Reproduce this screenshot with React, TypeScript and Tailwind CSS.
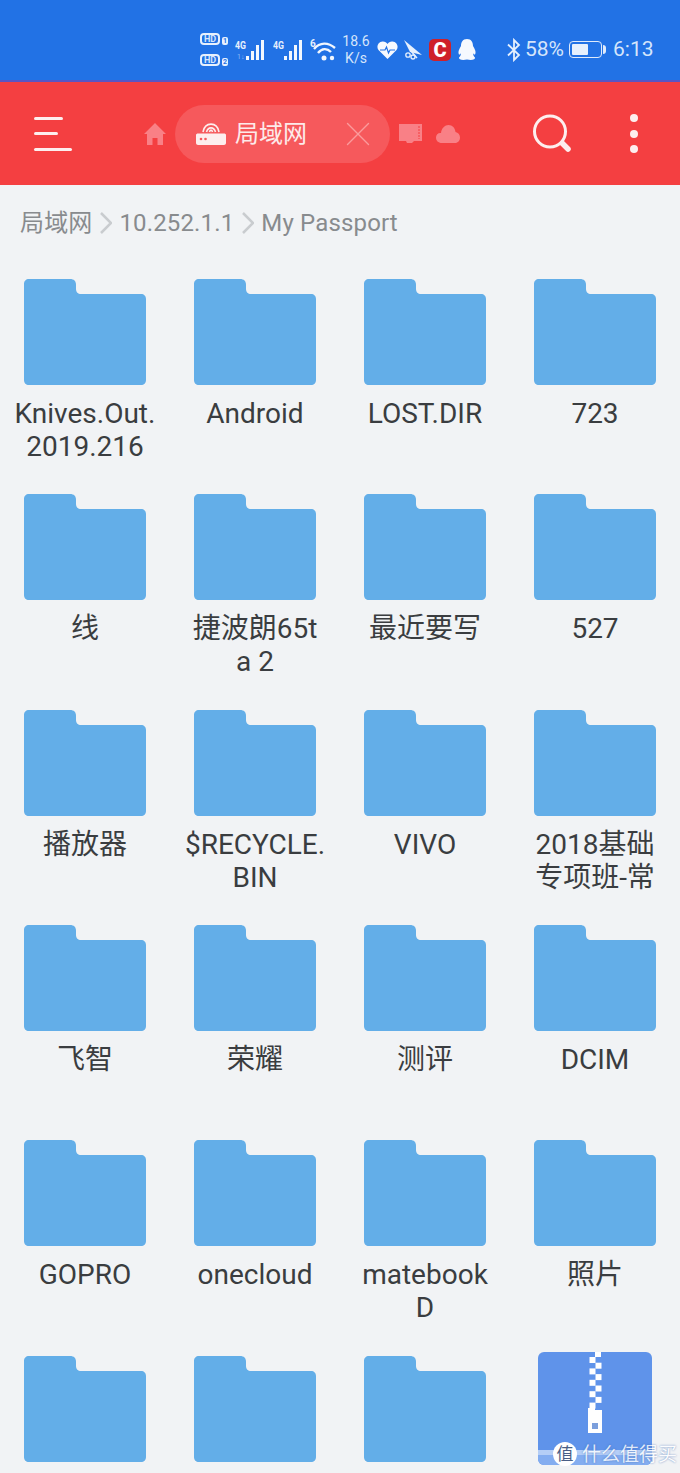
import React from "react";
import { X } from "lucide-react";

const ROBOTO = "font-['Roboto','Noto_Sans_CJK_SC',sans-serif]";

const items: { lines: string[]; zip?: boolean }[] = [
  { lines: ["Knives.Out.", "2019.216"] },
  { lines: ["Android"] },
  { lines: ["LOST.DIR"] },
  { lines: ["723"] },
  { lines: ["线"] },
  { lines: ["捷波朗65t", "a 2"] },
  { lines: ["最近要写"] },
  { lines: ["527"] },
  { lines: ["播放器"] },
  { lines: ["$RECYCLE.", "BIN"] },
  { lines: ["VIVO"] },
  { lines: ["2018基础", "专项班-常"] },
  { lines: ["飞智"] },
  { lines: ["荣耀"] },
  { lines: ["测评"] },
  { lines: ["DCIM"] },
  { lines: ["GOPRO"] },
  { lines: ["onecloud"] },
  { lines: ["matebook", "D"] },
  { lines: ["照片"] },
  { lines: [] },
  { lines: [] },
  { lines: [] },
  { lines: [], zip: true },
];

function FolderIcon() {
  return (
    <svg width="122" height="107" viewBox="0 0 122 107" className="shrink-0">
      <path
        d="M5 0H46C50 0 52 2 52 6V10C52 13 54 15 57 15H117C120 15 122 17 122 20V101C122 104 120 106 117 106H5C2 106 0 104 0 101V5C0 2 2 0 5 0Z"
        fill="#63aee8"
      />
    </svg>
  );
}

function ZipIcon() {
  const rows = [0, 1, 2, 3, 4, 5, 6, 7, 8];
  return (
    <svg width="114" height="114" viewBox="0 0 114 114" className="shrink-0 mt-[-4px]">
      <rect width="114" height="113" rx="6" fill="#5f93ea" />
      <path d="M0 98H114V107C114 110 111 113 108 113H6C3 113 0 110 0 107Z" fill="#84adf0" />
      <rect y="98" width="114" height="5" fill="#b5cef6" />
      <rect x="57" y="0" width="6" height="5" fill="#fff" />
      {rows.map((r) => (
        <rect key={r} x={r % 2 ? 57.5 : 51.5} y={5 + r * 5.7} width="6" height="6" fill="#fff" />
      ))}
      <path d="M50 56H57V58H64V81H50Z" fill="#fff" />
      <rect x="54" y="71" width="6" height="6" fill="#7c9fdc" />
    </svg>
  );
}

function Signal({ sub }: { sub?: boolean }) {
  return (
    <svg width="32" height="24" viewBox="0 0 32 24">
      <text x="0" y="11" fontSize="11" fontWeight="700" fill="#e6f0fd" fontFamily="Roboto" textLength="11" lengthAdjust="spacingAndGlyphs">4G</text>
      {sub && <text x="2" y="21" fontSize="7" fill="#8fbaf3" fontFamily="Roboto">1↓</text>}
      <rect x="11" y="18" width="3" height="4" fill="#f2f7fe" />
      <rect x="16" y="13" width="3" height="9" fill="#f2f7fe" />
      <rect x="21" y="7" width="3" height="15" fill="#f2f7fe" />
      <rect x="26" y="2" width="3" height="20" fill="#f2f7fe" />
    </svg>
  );
}

function StatusBar() {
  return (
    <div className={`h-[82px] pt-[19px] bg-[#2272e5] border-b-2 border-[#5a55c4] flex items-center text-[#d5e5fb] ${ROBOTO}`}>
      <div className="ml-[200px] flex flex-col gap-[9px]">
        {[1, 2].map((n) => (
          <div key={n} className="flex items-end gap-[2px]">
            <span className="h-[12px] w-[20px] rounded-[4px] border-2 border-[#e6f0fd] text-[9px] leading-[8px] font-bold text-center">HD</span>
            <span className="h-[8px] w-[6px] rounded-[2px] bg-[#e6f0fd] text-[7px] leading-[8px] text-center text-[#2272e5] font-bold">{n}</span>
          </div>
        ))}
      </div>
      <div className="ml-[7px]"><Signal sub /></div>
      <div className="ml-[6px]"><Signal /></div>
      <svg width="26" height="24" viewBox="0 0 26 24" className="ml-[5px]" fill="none" stroke="#f2f7fe" strokeWidth="2.4">
        <text x="0" y="9" fontSize="10" fontWeight="700" fill="#e6f0fd" stroke="none" fontFamily="Roboto">6</text>
        <path d="M4 11C10 4 18 4 25 10" />
        <path d="M8 15C12 10 17 10 21 14" />
        <circle cx="14" cy="20" r="2.5" fill="#f2f7fe" stroke="none" />
        <circle cx="22" cy="20" r="2.2" fill="#f2f7fe" stroke="none" />
      </svg>
      <div className="ml-[6px] w-[28px] text-center text-[14px] leading-[17px] font-normal">
        <div>18.6</div>
        <div>K/s</div>
      </div>
      <svg width="21" height="18" viewBox="0 0 21 18" className="ml-[7px]">
        <path d="M10.5 18L1.5 9C-1 5.5 1 1 5.5 0.5C7.8 0.3 9.5 1.5 10.5 3C11.5 1.5 13.2 0.3 15.5 0.5C20 1 22 5.5 19.5 9Z" fill="#f6f9fe" />
        <path d="M3 9H8L9.5 6L11.5 12L13 9H18" fill="none" stroke="#2272e5" strokeWidth="1.2" />
      </svg>
      <svg width="20" height="20" viewBox="0 0 20 20" className="ml-[5px]" fill="none" stroke="#e6f0fd">
        <path d="M1 0L19 15L7 12Z" fill="#e6f0fd" stroke="none" />
        <path d="M8 11L14 18" strokeWidth="1.5" />
        <circle cx="5" cy="15" r="2.2" strokeWidth="1.3" />
        <circle cx="10" cy="17" r="2" strokeWidth="1.3" />
      </svg>
      <div className="ml-[6px] w-[22px] h-[22px] rounded-[5px] bg-[#cf2029] flex items-center justify-center text-white text-[20px] leading-none font-black">C</div>
      <svg width="20" height="22" viewBox="0 0 20 22" className="ml-[6px]">
        <path d="M10 0C14.5 0 16 3.5 16 7C17.5 9.5 19.5 13 18 15.5C17 15.5 16.5 15 16 14C16 16 17 17.5 18 18.5C18.5 20.5 15 21.5 10 20.5C5 21.5 1.5 20.5 2 18.5C3 17.5 4 16 4 14C3.5 15 3 15.5 2 15.5C0.5 13 2.5 9.5 4 7C4 3.5 5.5 0 10 0Z" fill="#f6f9fe" />
      </svg>
      <svg width="14" height="24" viewBox="0 0 14 24" className="ml-[30px]" fill="none" stroke="#e6f0fd" strokeWidth="1.8">
        <path d="M1 6.5L12 17L7 22V2L12 7L1 17.5" />
      </svg>
      <span className="ml-[4px] text-[21px] leading-none">58%</span>
      <div className="ml-[5px] flex items-center">
        <div className="w-[33px] h-[17px] rounded-[4px] border border-[#dfeafb] p-[2px]">
          <div className="w-[58%] h-full rounded-[1px] bg-[#e6f0fd]" />
        </div>
        <div className="ml-[1px] w-[3px] h-[9px] rounded-r bg-[#dfeafb]" />
      </div>
      <span className="ml-[7px] text-[21px] leading-none">6:13</span>
    </div>
  );
}

function Toolbar() {
  return (
    <div className="h-[103px] bg-[#f43f41] flex items-center">
      <div className="ml-[34px] w-[38px] flex flex-col gap-[12.5px]">
        <div className="h-[3px] w-[29px] bg-[#fdeeee] rounded-full" />
        <div className="h-[3px] w-[24px] bg-[#fdeeee] rounded-full" />
        <div className="h-[3px] w-[38px] bg-[#fdeeee] rounded-full" />
      </div>
      <svg width="22" height="22" viewBox="0 0 22 22" className="ml-[72px] mt-[1px]">
        <path d="M11 0L22 11H19V22H13.5V15H8.5V22H3V11H0Z" fill="#f98086" />
      </svg>
      <div className="ml-[9px] w-[215px] h-[58px] rounded-full bg-[#f6595c] flex items-center">
        <svg width="30" height="22" viewBox="0 0 30 22" className="ml-[21px]">
          <path d="M0 12C0 11 1 10.5 2 10.5H28C29 10.5 30 11 30 12V20C30 21 29 22 28 22H2C1 22 0 21 0 20Z" fill="#fdeeee" />
          <circle cx="5" cy="16" r="1.3" fill="#f6595c" />
          <circle cx="9.5" cy="16" r="1.3" fill="#f6595c" />
          <path d="M7 9C9 -1.5 21 -1.5 23 9M10.5 9C12 3.5 18 3.5 19.5 9M13.5 9C14 6.5 16 6.5 16.5 9" fill="none" stroke="#fdeeee" strokeWidth="1.6" />
        </svg>
        <span className={`ml-[9px] text-[24px] leading-none text-[#fdeaea] ${ROBOTO}`}>局域网</span>
        <X className="ml-[30px] text-[#fb9a9c]" size={42} strokeWidth={0.8} />
      </div>
      <svg width="24" height="20" viewBox="0 0 24 20" className="ml-[8px]">
        <path d="M1 0H24V17H16L14 19H9L8 17H1Z" fill="#f98086" />
        <path d="M21 2V15" stroke="#f43f41" strokeWidth="1" strokeDasharray="2 1" />
      </svg>
      <svg width="24" height="18" viewBox="0 0 24 18" className="ml-[14px]">
        <path d="M6 18C2 18 0 15.5 0 12.5C0 9.5 2.5 7.5 5 8C5.5 3 9 0 12.5 0C16.5 0 19 3 19.5 7C22 7.5 24 9.5 24 12.5C24 15.5 22 18 19 18Z" fill="#f98086" />
      </svg>
      <svg width="40" height="40" viewBox="0 0 40 40" className="ml-[72px]" fill="none" stroke="#fdeeee">
        <circle cx="18" cy="17.5" r="15.5" strokeWidth="3" />
        <path d="M30.5 29.5L36 35" strokeWidth="5.5" strokeLinecap="round" />
      </svg>
      <div className="ml-[58px] flex flex-col gap-[7.5px]">
        <div className="w-[8px] h-[8px] rounded-full bg-[#fdeeee]" />
        <div className="w-[8px] h-[8px] rounded-full bg-[#fdeeee]" />
        <div className="w-[8px] h-[8px] rounded-full bg-[#fdeeee]" />
      </div>
    </div>
  );
}

function Chevron() {
  return (
    <svg width="12" height="22" viewBox="0 0 12 22" fill="none" stroke="#c9cccf" strokeWidth="2.5">
      <path d="M1 1L11 11L1 21" />
    </svg>
  );
}

function Breadcrumb() {
  return (
    <div className={`h-[94px] pl-[20px] pt-[21px] flex items-start gap-[7.5px] text-[24px] leading-[34px] tracking-[0.15px] text-[#888b8e] ${ROBOTO}`}>
      <span>局域网</span>
      <div className="h-[34px] flex items-center"><Chevron /></div>
      <span>10.252.1.1</span>
      <div className="h-[34px] flex items-center"><Chevron /></div>
      <span>My Passport</span>
    </div>
  );
}

export default function App() {
  return (
    <div className="relative w-[680px] h-[1473px] overflow-hidden bg-[#f1f3f5]">
      <StatusBar />
      <Toolbar />
      <Breadcrumb />
      <div className="grid grid-cols-4">
        {items.map((item, i) => (
          <div key={i} className="h-[215.35px] flex flex-col items-center">
            {item.zip ? <ZipIcon /> : <FolderIcon />}
            <div className={`mt-[11px] text-center text-[28px] leading-[33px] text-[#3a3d40] whitespace-nowrap ${ROBOTO}`}>
              {item.lines.map((line) => (
                <div key={line}>{line}</div>
              ))}
            </div>
          </div>
        ))}
      </div>
      <div className="absolute right-[3px] bottom-[7px] flex items-center gap-[5px]">
        <div className={`w-[24px] h-[24px] rounded-full bg-white flex items-center justify-center text-[17px] leading-none text-[#4a5f86] ${ROBOTO}`}>值</div>
        <span className={`text-[19px] leading-none text-white opacity-80 [text-shadow:0_0_2px_#3d6ab5] ${ROBOTO}`}>什么值得买</span>
      </div>
    </div>
  );
}
